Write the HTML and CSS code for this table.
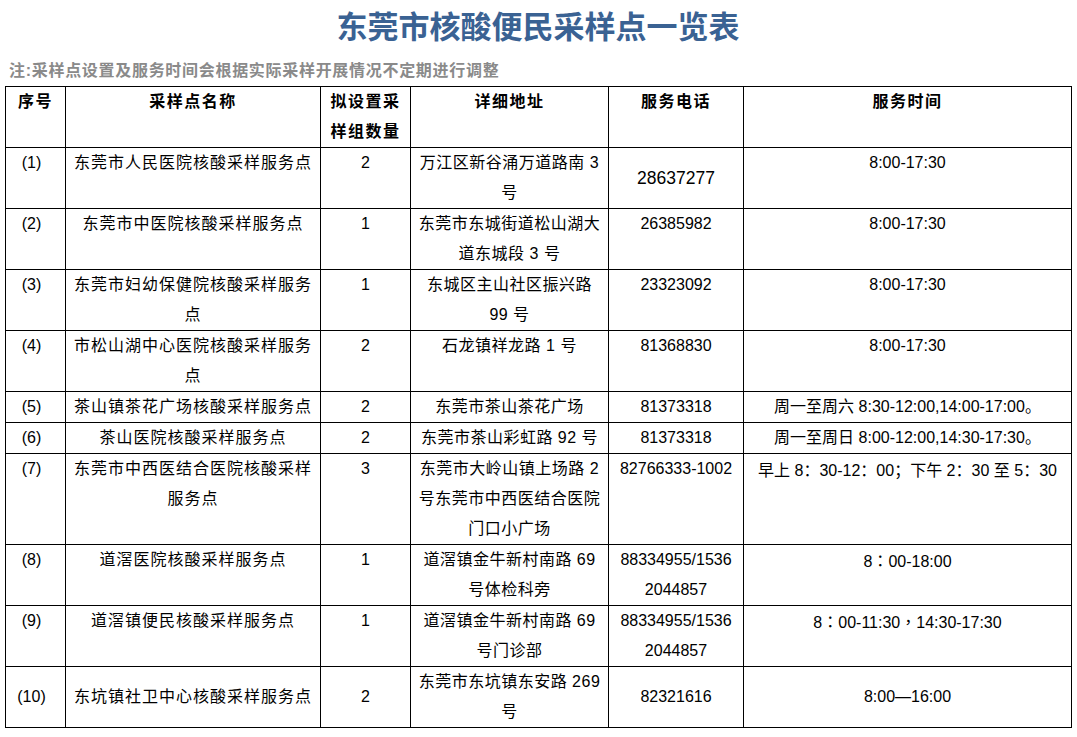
FILE: index.html
```html
<!DOCTYPE html>
<html lang="zh-CN">
<head>
<meta charset="utf-8">
<title>东莞市核酸便民采样点一览表</title>
<link rel="stylesheet" href="styles.css">
</head>
<body>
<div class="page">
  <h1 class="title">东莞市核酸便民采样点一览表</h1>
  <p class="note">注:采样点设置及服务时间会根据实际采样开展情况不定期进行调整</p>
  <table class="sites">
    <colgroup>
      <col class="c-no">
      <col class="c-name">
      <col class="c-count">
      <col class="c-addr">
      <col class="c-phone">
      <col class="c-time">
    </colgroup>
    <thead>
      <tr>
        <th>序号</th>
        <th>采样点名称</th>
        <th>拟设置采<br>样组数量</th>
        <th>详细地址</th>
        <th>服务电话</th>
        <th>服务时间</th>
      </tr>
    </thead>
    <tbody>
      <tr>
        <td class="no">(1)</td>
        <td class="name">东莞市人民医院核酸采样服务点</td>
        <td>2</td>
        <td class="addr">万江区新谷涌万道路南 3<br>号</td>
        <td class="phone big mid">28637277</td>
        <td>8:00-17:30</td>
      </tr>
      <tr>
        <td class="no">(2)</td>
        <td class="name">东莞市中医院核酸采样服务点</td>
        <td>1</td>
        <td class="addr">东莞市东城街道松山湖大<br>道东城段 3 号</td>
        <td class="phone">26385982</td>
        <td>8:00-17:30</td>
      </tr>
      <tr>
        <td class="no">(3)</td>
        <td class="name">东莞市妇幼保健院核酸采样服务<br>点</td>
        <td>1</td>
        <td class="addr">东城区主山社区振兴路<br>99 号</td>
        <td class="phone">23323092</td>
        <td>8:00-17:30</td>
      </tr>
      <tr>
        <td class="no">(4)</td>
        <td class="name">市松山湖中心医院核酸采样服务<br>点</td>
        <td>2</td>
        <td class="addr">石龙镇祥龙路 1 号</td>
        <td class="phone">81368830</td>
        <td>8:00-17:30</td>
      </tr>
      <tr>
        <td class="no">(5)</td>
        <td class="name">茶山镇茶花广场核酸采样服务点</td>
        <td>2</td>
        <td class="addr">东莞市茶山茶花广场</td>
        <td class="phone">81373318</td>
        <td>周一至周六 8:30-12:00,14:00-17:00。</td>
      </tr>
      <tr>
        <td class="no">(6)</td>
        <td class="name">茶山医院核酸采样服务点</td>
        <td>2</td>
        <td class="addr">东莞市茶山彩虹路 92 号</td>
        <td class="phone">81373318</td>
        <td>周一至周日 8:00-12:00,14:30-17:30。</td>
      </tr>
      <tr>
        <td class="no">(7)</td>
        <td class="name">东莞市中西医结合医院核酸采样<br>服务点</td>
        <td>3</td>
        <td class="addr">东莞市大岭山镇上场路 2<br>号东莞市中西医结合医院<br>门口小广场</td>
        <td class="phone">82766333-1002</td>
        <td>早上 8<span class="fw">：</span>30-12<span class="fw">：</span>00<span class="fw">；</span>下午 2<span class="fw">：</span>30 至 5<span class="fw">：</span>30</td>
      </tr>
      <tr>
        <td class="no">(8)</td>
        <td class="name">道滘医院核酸采样服务点</td>
        <td>1</td>
        <td class="addr">道滘镇金牛新村南路 69<br>号体检科旁</td>
        <td class="phone">88334955/1536<br>2044857</td>
        <td>8<span class="fw">：</span>00-18:00</td>
      </tr>
      <tr>
        <td class="no">(9)</td>
        <td class="name">道滘镇便民核酸采样服务点</td>
        <td>1</td>
        <td class="addr">道滘镇金牛新村南路 69<br>号门诊部</td>
        <td class="phone">88334955/1536<br>2044857</td>
        <td>8<span class="fw">：</span>00-11:30<span class="fw">，</span>14:30-17:30</td>
      </tr>
      <tr class="mid-row">
        <td class="no">(10)</td>
        <td class="name">东坑镇社卫中心核酸采样服务点</td>
        <td>2</td>
        <td class="addr">东莞市东坑镇东安路 269<br>号</td>
        <td class="phone">82321616</td>
        <td>8:00—16:00</td>
      </tr>
    </tbody>
  </table>
</div>
</body>
</html>
```

FILE: styles.css
```css
html, body {
  margin: 0;
  padding: 0;
  background: #ffffff;
}

body {
  font-family: "Liberation Sans", "Noto Sans CJK SC", sans-serif;
  color: #000000;
}

.page {
  padding: 0 6px 0 5px;
}

.title {
  margin: 0;
  height: 56px;
  line-height: 56px;
  text-align: center;
  font-size: 31px;
  font-weight: 700;
  color: #3a6293;
}

.note {
  margin: 0;
  height: 30px;
  line-height: 30px;
  padding-left: 4px;
  font-size: 16px;
  font-weight: 700;
  letter-spacing: 0.7px;
  color: #8a8a8a;
}

.sites {
  border-collapse: collapse;
  table-layout: fixed;
  width: 1066px;
}

.c-no { width: 60px; }
.c-name { width: 255px; }
.c-count { width: 90px; }
.c-addr { width: 198px; }
.c-phone { width: 135px; }
.c-time { width: 328px; }

.sites th,
.sites td {
  border: 1px solid #000000;
  padding: 0 2px;
  line-height: 30px;
  font-size: 16px;
  text-align: center;
  vertical-align: top;
  white-space: nowrap;
  overflow: visible;
}

.sites th {
  font-weight: 700;
  letter-spacing: 1.5px;
}

.sites td.no {
  padding: 0 8px 0 0;
}

.sites td.name {
  letter-spacing: 1px;
}

.sites td.addr {
  letter-spacing: 0.5px;
}

.sites td.big {
  font-size: 17.5px;
}

.sites td.mid,
.sites tr.mid-row td {
  vertical-align: middle;
}

.fw {
  font-family: "Noto Sans CJK TC", "Noto Sans CJK SC", sans-serif;
}
```
